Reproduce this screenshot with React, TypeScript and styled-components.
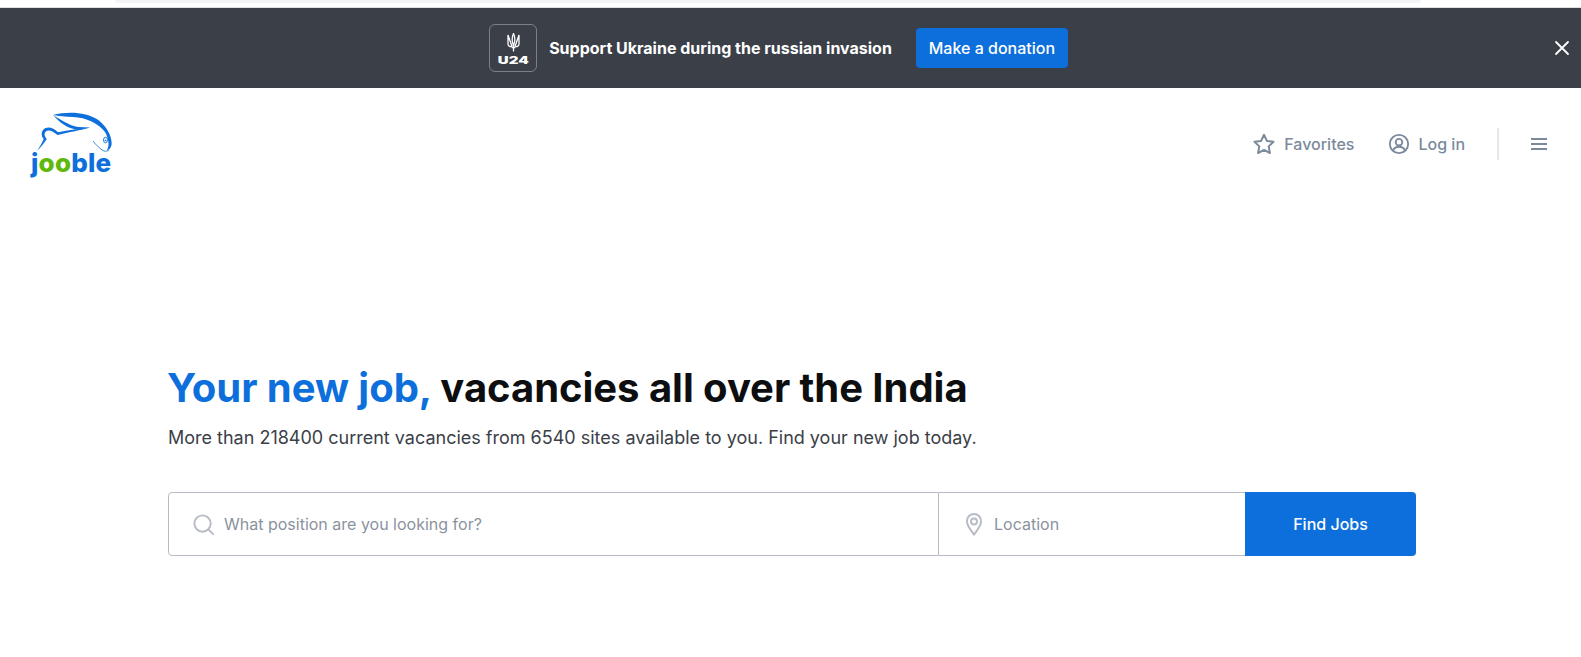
import styled, { createGlobalStyle } from 'styled-components';
import { useState } from 'react';

const GlobalStyle = createGlobalStyle`
  html, body {
    margin: 0;
    padding: 0;
    background: #fff;
    font-family: Inter, 'Noto Sans', sans-serif;
  }
  * {
    box-sizing: border-box;
  }
`;

const Page = styled.div`
  width: 100%;
  min-height: 657px;
  overflow: hidden;
`;

const BrowserStrip = styled.div`
  height: 8px;
  padding: 0 160px 0 115px;
  border-bottom: 1px solid #dcdfe3;
`;

const StripPill = styled.div`
  height: 3px;
  background: #f1f3f4;
  border-radius: 0 0 10px 10px;
`;

const Banner = styled.div`
  position: relative;
  height: 80px;
  background: #3b4048;
  display: flex;
  align-items: center;
  justify-content: center;
  padding-right: 24px;
`;

const BadgeBox = styled.div`
  width: 48px;
  height: 48px;
  border: 1px solid #7d8187;
  border-radius: 6px;
  display: flex;
  flex-direction: column;
  align-items: center;
  justify-content: center;
  gap: 4px;
  margin-right: 12px;
`;

const BadgeLabel = styled.span`
  font-size: 10px;
  line-height: 8px;
  font-weight: 900;
  color: #fff;
  transform: scaleX(1.5);
`;

const BannerText = styled.span`
  font-size: 16px;
  font-weight: 700;
  color: #fff;
  margin-right: 24px;
`;

const DonateButton = styled.button`
  height: 40px;
  width: 152px;
  border: 0;
  border-radius: 4px;
  background: #0d6fdb;
  color: #fff;
  font: 500 16px Inter, sans-serif;
  cursor: pointer;
`;

const CloseButton = styled.button`
  position: absolute;
  right: 11px;
  top: 32px;
  width: 16px;
  height: 16px;
  padding: 0;
  border: 0;
  background: none;
  color: #fff;
  display: flex;
  cursor: pointer;
`;

const Header = styled.header`
  height: 112px;
  display: flex;
  align-items: center;
  justify-content: space-between;
  padding: 0 34px 0 31px;
`;

const Logo = styled.a`
  display: flex;
  flex-direction: column;
  width: 82px;
  margin-top: -2px;
`;

const LogoText = styled.span`
  font-size: 26px;
  line-height: 22px;
  font-weight: 800;
  letter-spacing: 0.2px;
  color: #0d6fdb;
  margin-top: -2px;
`;

const LogoGreen = styled.span`
  color: #5fb80c;
`;

const Nav = styled.nav`
  display: flex;
  align-items: center;
  color: #7c8a9c;
  font-size: 16px;
  font-weight: 500;
`;

const NavItem = styled.a<{ $end?: number }>`
  display: flex;
  align-items: center;
  gap: 8px;
  margin-right: ${(p) => p.$end ?? 34}px;
`;

const NavDivider = styled.div`
  width: 2px;
  height: 32px;
  background: #e3e8ef;
  margin-right: 32px;
`;

const MenuIcon = styled.div`
  width: 16px;
  height: 12px;
  border-top: 2px solid #7c8a9c;
  border-bottom: 2px solid #7c8a9c;
  position: relative;
  &::after {
    content: '';
    position: absolute;
    left: 0;
    right: 0;
    top: 3px;
    height: 2px;
    background: #7c8a9c;
  }
`;

const Hero = styled.main`
  padding: 0 165px 0 168px;
  margin-top: 160px;
`;

const Title = styled.h1`
  margin: 0 0 0 -1px;
  font-size: 40px;
  line-height: 56px;
  font-weight: 700;
  letter-spacing: -0.04px;
  color: #0c0e10;
`;

const TitleAccent = styled.span`
  color: #0d6fdb;
`;

const Subtitle = styled.p`
  margin: 10px 0 0;
  font-size: 18px;
  line-height: 24px;
  color: #3b4048;
`;

const SearchForm = styled.form`
  margin-top: 42px;
  height: 64px;
  display: flex;
`;

const Field = styled.label<{ $width: number; $first?: boolean }>`
  width: ${(p) => p.$width}px;
  display: flex;
  align-items: center;
  gap: 7px;
  padding-left: ${(p) => (p.$first ? 23 : 26)}px;
  border: 1px solid #b8bcc6;
  border-left-width: ${(p) => (p.$first ? 1 : 0)}px;
  border-right-width: ${(p) => (p.$first ? 1 : 0)}px;
  border-radius: ${(p) => (p.$first ? '4px 0 0 4px' : '0')};
`;

const FieldInput = styled.input<{ $gap?: number }>`
  flex: 1;
  min-width: 0;
  border: 0;
  outline: 0;
  padding: 0;
  margin-left: ${(p) => p.$gap ?? 0}px;
  background: transparent;
  font: 400 16px Inter, sans-serif;
  &::placeholder {
    color: #8b92a0;
    opacity: 1;
  }
`;

const SubmitButton = styled.button`
  flex: 1;
  border: 0;
  border-radius: 0 4px 4px 0;
  background: #0d6fdb;
  color: #fff;
  font: 500 16px Inter, sans-serif;
  cursor: pointer;
`;

function RabbitMark() {
  return (
    <svg width="82" height="42" viewBox="0 0 82 42" fill="none">
      {/* top of the ear running down to the nose */}
      <path d="M22 3 C36 -0.5 55 -0.5 68 8.5 C76 15 81.5 25 80.5 33 C80 36 78 38 76 38 C78.5 34 78 27 74 20 C68 11.5 55 5.5 42 5 C34 4.6 28 4 22 3 Z" fill="#0d6fdb" />
      {/* lower edge of the ear */}
      <path d="M22 3 C30 8 38 13.5 47 15 L59 15.5 L47 17.8 C36 16.5 28 10 22 3 Z" fill="#0d6fdb" />
      {/* back, head hump and tail */}
      <path d="M59 15.5 C48 17 38 18 27 20.3 C22 15 15.5 14 12.2 17.8 C9.7 21 10.7 25 12.7 27 C10.5 32 8 36 6 39 C9.5 35.5 13.2 31 15.8 27 C13.2 24 12.8 21 15.2 19.2 C18 17.2 22 19.2 26.5 23 C38 20.2 50 18.2 59 15.5 Z" fill="#0d6fdb" />
      {/* face */}
      <path d="M62 29 C65 33 69 37 73 39 C75 39.6 77 39 78 38" stroke="#0d6fdb" strokeWidth="0.8" />
      <ellipse cx="74.5" cy="28" rx="2" ry="2.8" stroke="#0d6fdb" strokeWidth="0.9" />
      <circle cx="74.5" cy="28.5" r="0.8" fill="#0d6fdb" />
    </svg>
  );
}

function TridentMark() {
  return (
    <svg width="13" height="19" viewBox="0 0 13 19" fill="none" stroke="#fff" strokeWidth="1.3">
      <path d="M6.5 0.5 C5 3.5 5 8 6 11 L6.5 12.5 L7 11 C8 8 8 3.5 6.5 0.5 Z" />
      <path d="M1 2 V11 C1 13.5 3.5 14 5 13 C3.5 10 2.5 6 1 2 Z" />
      <path d="M12 2 V11 C12 13.5 9.5 14 8 13 C9.5 10 10.5 6 12 2 Z" />
      <path d="M4.5 14.5 H8.5 M6.5 13 V18.5" />
    </svg>
  );
}

export default function App() {
  const [showBanner, setShowBanner] = useState(true);

  return (
    <Page>
      <GlobalStyle />
      <BrowserStrip>
        <StripPill />
      </BrowserStrip>
      {showBanner ? (
        <Banner>
          <BadgeBox>
            <TridentMark />
            <BadgeLabel>U24</BadgeLabel>
          </BadgeBox>
          <BannerText>Support Ukraine during the russian invasion</BannerText>
          <DonateButton>Make a donation</DonateButton>
          <CloseButton onClick={() => setShowBanner(false)} aria-label="Close">
            <svg width="16" height="16" viewBox="0 0 16 16" stroke="currentColor" strokeWidth="1.8" strokeLinecap="round">
              <path d="M2 2 L14 14 M14 2 L2 14" />
            </svg>
          </CloseButton>
        </Banner>
      ) : null}
      <Header>
        <Logo>
          <RabbitMark />
          <LogoText>
            j<LogoGreen>oo</LogoGreen>ble
          </LogoText>
        </Logo>
        <Nav>
          <NavItem>
            <svg width="24" height="24" viewBox="0 0 24 24" fill="none" stroke="currentColor" strokeWidth="2" strokeLinejoin="round">
              <path d="M12 2.8 L14.9 8.9 L21.5 9.8 L16.7 14.4 L17.9 21 L12 17.8 L6.1 21 L7.3 14.4 L2.5 9.8 L9.1 8.9 Z" />
            </svg>
            Favorites
          </NavItem>
          <NavItem $end={32}>
            <svg width="22" height="22" viewBox="0 0 24 24" fill="none" stroke="currentColor" strokeWidth="2">
              <circle cx="12" cy="12" r="10" />
              <circle cx="12" cy="10" r="3.6" />
              <path d="M5.5 19 C7 15.8 9.5 15 12 15 C14.5 15 17 15.8 18.5 19" />
            </svg>
            Log in
          </NavItem>
          <NavDivider />
          <MenuIcon />
        </Nav>
      </Header>
      <Hero>
        <Title>
          <TitleAccent>Your new job,</TitleAccent> vacancies all over the India
        </Title>
        <Subtitle>More than 218400 current vacancies from 6540 sites available to you. Find your new job today.</Subtitle>
        <SearchForm onSubmit={(e) => e.preventDefault()}>
          <Field $width={771} $first>
            <svg width="23" height="23" viewBox="0 0 24 24" fill="none" stroke="#b8bcc6" strokeWidth="2" strokeLinecap="round">
              <circle cx="11" cy="11" r="8.5" />
              <path d="M17.5 17.5 L22 22" />
            </svg>
            <FieldInput $gap={2} placeholder="What position are you looking for?" />
          </Field>
          <Field $width={306}>
            <svg width="18" height="24" viewBox="0 0 18 24" fill="none" stroke="#b8bcc6" strokeWidth="2">
              <path d="M9 22.5 C5.5 17.5 2 14 2 9.5 C2 5 5 2 9 2 C13 2 16 5 16 9.5 C16 14 12.5 17.5 9 22.5 Z" />
              <circle cx="9" cy="9.5" r="3" />
            </svg>
            <FieldInput $gap={4} placeholder="Location" />
          </Field>
          <SubmitButton>Find Jobs</SubmitButton>
        </SearchForm>
      </Hero>
    </Page>
  );
}
